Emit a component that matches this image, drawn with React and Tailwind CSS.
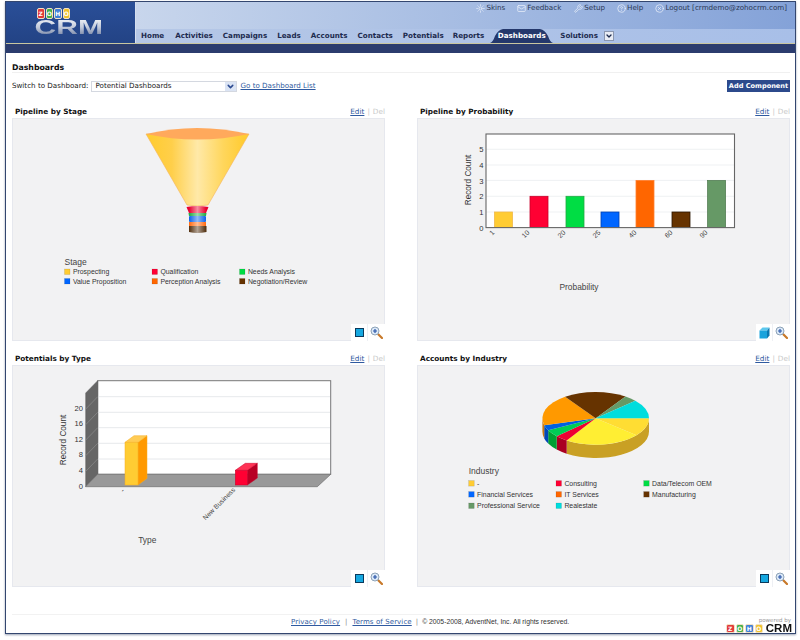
import { Sun, Mail, Wrench, HelpCircle, XCircle, ChevronDown } from "lucide-react";

const navItems = [
  { label: "Home", cls: "mr-[11px]" },
  { label: "Activities", cls: "mr-[10px]" },
  { label: "Campaigns", cls: "mr-[10px]" },
  { label: "Leads", cls: "mr-[10px]" },
  { label: "Accounts", cls: "mr-[10px]" },
  { label: "Contacts", cls: "mr-[10px]" },
  { label: "Potentials", cls: "mr-[9px]" },
  { label: "Reports", cls: "mr-[10px]" },
];
const topLinks = [
  { label: "Skins", icon: Sun, cls: "ml-0" },
  { label: "Feedback", icon: Mail, cls: "ml-[12px]" },
  { label: "Setup", icon: Wrench, cls: "ml-[13px]" },
  { label: "Help", icon: HelpCircle, cls: "ml-[12px]" },
  { label: "Logout [crmdemo@zohocrm.com]", icon: XCircle, cls: "ml-[12px]" },
];

const C = { yellow: "#ffcc33", red: "#ff0033", green: "#00dd44", blue: "#0066ff", orange: "#ff6600", brown: "#663300", sage: "#669966", cyan: "#00dddd" };
const legendFont = "'Liberation Sans', Arial, sans-serif";

function Legend({ title, titleX, titleY, items }) {
  return (
    <g fontFamily={legendFont} fontSize="6.9" fill="#333">
      <text x={titleX} y={titleY} fontSize="8.5" fill="#444">{title}</text>
      {items.map(it => (
        <g key={it.label}>
          <rect x={it.x} y={it.y - 5} width="5.5" height="5.5" fill={it.color} stroke="#0003" strokeWidth="0.5" />
          <text x={it.x + 8.4} y={it.y + 0.4}>{it.label}</text>
        </g>
      ))}
    </g>
  );
}

function FunnelChart() {
  return (
    <svg viewBox="12 118 373 223" className="w-full h-full block">
      <defs>
        <linearGradient id="fy" x1="0" x2="1" y1="0" y2="0">
          <stop offset="0.05" stopColor="#ffcc33" />
          <stop offset="0.25" stopColor="#ffcf4a" />
          <stop offset="0.5" stopColor="#ffe9a8" />
          <stop offset="0.75" stopColor="#ffd65c" />
          <stop offset="0.95" stopColor="#ffcc33" />
        </linearGradient>
        <linearGradient id="fshine" x1="0" x2="1" y1="0" y2="0">
          <stop offset="0" stopColor="#fff" stopOpacity="0" />
          <stop offset="0.5" stopColor="#fff" stopOpacity="0.55" />
          <stop offset="1" stopColor="#fff" stopOpacity="0" />
        </linearGradient>
      </defs>
      <path d="M146 134 L187 205 Q197 207 208 205 L249 134 Z" fill="url(#fy)" stroke="#f5b45a" strokeWidth="0.6" />
      <path d="M146 134 Q197 122 249 134 Q197 145 146 134 Z" fill="#ffa95c" />
      <path d="M186.5 207 Q197 205 208.5 207 L206 213 L189 213 Z" fill="#e8002e" />
      <path d="M188.5 213 H206.5 L206 216 H189 Z" fill="#22aa44" />
      <rect x="189" y="216" width="17" height="6" rx="1" fill="#0a62e8" />
      <rect x="189" y="222" width="17" height="4" fill="#ff6a10" />
      <path d="M189 226 H206.5 V232 Q197 234 189 232 Z" fill="#52300f" />
      <rect x="189" y="206" width="17" height="27" fill="url(#fshine)" />
      <Legend title="Stage" titleX={64.5} titleY={265} items={[
        { label: "Prospecting", x: 64.5, y: 274, color: C.yellow },
        { label: "Qualification", x: 152, y: 274, color: C.red },
        { label: "Needs Analysis", x: 239.5, y: 274, color: C.green },
        { label: "Value Proposition", x: 64.5, y: 283.5, color: C.blue },
        { label: "Perception Analysis", x: 152, y: 283.5, color: C.orange },
        { label: "Negotiation/Review", x: 239.5, y: 283.5, color: C.brown },
      ]} />
    </svg>
  );
}

const probBars = [
  { label: "1", x: 494.5, top: 212, color: C.yellow, edge: "#f0b84a", lx: 495 },
  { label: "10", x: 530, top: 196.3, color: C.red, edge: "#c8002a", lx: 530 },
  { label: "20", x: 566, top: 196.3, color: C.green, edge: "#22aa44", lx: 566 },
  { label: "25", x: 601, top: 212, color: C.blue, edge: "#0040b0", lx: 601 },
  { label: "40", x: 636, top: 180.4, color: C.orange, edge: "#ff8030", lx: 637 },
  { label: "60", x: 672, top: 212, color: C.brown, edge: "#2a1500", lx: 673 },
  { label: "90", x: 707.6, top: 180.4, color: C.sage, edge: "#557f55", lx: 708 },
];

function ProbabilityChart() {
  return (
    <svg viewBox="417 118 373 223" className="w-full h-full block" fontFamily={legendFont}>
      <rect x="486" y="134" width="248.5" height="93.6" fill="#fff" />
      {[149.3, 165, 180.4, 196.3, 212].map(y => <line key={y} x1="486" x2="734" y1={y} y2={y} stroke="#e8ebee" strokeWidth="0.7" />)}
      {probBars.map(b => (
        <rect key={b.label} x={b.x} y={b.top} width="18" height={227.4 - b.top} fill={b.color} stroke={b.edge} strokeWidth="0.8" />
      ))}
      <rect x="486" y="134" width="248.5" height="93.6" fill="none" stroke="#666" strokeWidth="1.1" />
      {[5, 4, 3, 2, 1, 0].map((n, i) => <text key={n} x="483.5" y={152.2 + i * 15.7} fontSize="7.6" textAnchor="end" fill="#333">{n}</text>)}
      {probBars.map(b => (
        <text key={b.label} transform={`translate(${b.lx} 233) rotate(-45)`} fontSize="7" textAnchor="end" fill="#444">{b.label}</text>
      ))}
      <text transform="translate(471 180) rotate(-90)" fontSize="8.2" textAnchor="middle" fill="#333">Record Count</text>
      <text x="579" y="289.5" fontSize="8.4" textAnchor="middle" fill="#444">Probability</text>
    </svg>
  );
}

function Bar3d({ x, w, top, bottom, dx, dy, front, side, cap, edge }) {
  return (
    <g stroke={edge} strokeWidth="0.5">
      <path d={`M${x + w} ${top} l${dx} ${-dy} V${bottom - dy} L${x + w} ${bottom} Z`} fill={side} />
      <path d={`M${x} ${top} l${dx} ${-dy} h${w} l${-dx} ${dy} Z`} fill={cap} />
      <rect x={x} y={top} width={w} height={bottom - top} fill={front} />
    </g>
  );
}

function TypeChart() {
  const rows = [396.7, 412.3, 427.7, 443.3, 459];
  return (
    <svg viewBox="12 365 373 222" className="w-full h-full block" fontFamily={legendFont}>
      <rect x="97.7" y="380.7" width="233" height="93.6" fill="#fff" stroke="#777" strokeWidth="1" />
      <path d="M97.7 380.7 L85.7 393 V486.7 L97.7 474.3 Z" fill="#666" stroke="#555" strokeWidth="0.5" />
      {rows.map(y => (
        <g key={y} stroke="#dfe2e6" strokeWidth="0.8">
          <line x1="98" x2="330" y1={y} y2={y} />
          <line x1="85.7" x2="97.7" y1={y + 12.4} y2={y} stroke="#888" />
        </g>
      ))}
      <path d="M97.7 474.3 H330.7 L317.3 486.7 H85.7 Z" fill="#999" stroke="#777" strokeWidth="0.8" />
      <Bar3d x={125} w={13} top={442.3} bottom={485} dx={9} dy={6.6} front="#ffcc33" side="#ff9900" cap="#ffcc55" edge="#f5ad20" />
      <Bar3d x={235.3} w={12} top={470.3} bottom={485} dx={10} dy={7} front="#ff0033" side="#b80025" cap="#ff3355" edge="#c8002a" />
      {[20, 16, 12, 8, 4, 0].map((n, i) => <text key={n} x="83" y={410.6 + i * 15.6} fontSize="7.6" textAnchor="end" fill="#333">{n}</text>)}
      <text transform="translate(66 440) rotate(-90)" fontSize="8.2" textAnchor="middle" fill="#333">Record Count</text>
      <text transform="translate(125 491) rotate(-45)" fontSize="7" textAnchor="end" fill="#444">-</text>
      <text transform="translate(235.5 490.5) rotate(-45)" fontSize="6.7" textAnchor="end" fill="#444">New Business</text>
      <text x="147.3" y="542.7" fontSize="8.4" textAnchor="middle" fill="#444">Type</text>
    </svg>
  );
}

// parametric ellipse helpers for the pie, angles in degrees clockwise from 3 o'clock
const pie = { cx: 595.7, cy: 418.3, rx: 53.3, ry: 26.4, d: 13.3 };
const pt = (t) => [pie.cx + pie.rx * Math.cos((t * Math.PI) / 180), pie.cy + pie.ry * Math.sin((t * Math.PI) / 180)];
const wedge = (a, b) => {
  const [x1, y1] = pt(a);
  const [x2, y2] = pt(b);
  return `M${pie.cx} ${pie.cy} L${x1} ${y1} A${pie.rx} ${pie.ry} 0 ${b - a > 180 ? 1 : 0} 1 ${x2} ${y2} Z`;
};
const band = (a, b) => {
  const [x1, y1] = pt(a);
  const [x2, y2] = pt(b);
  return `M${x1} ${y1} A${pie.rx} ${pie.ry} 0 0 1 ${x2} ${y2} v${pie.d} A${pie.rx} ${pie.ry} 0 0 0 ${x1} ${y1 + pie.d} Z`;
};
const slices = [
  [0, 40, "#ffdd33"], [40, 123, "#ffee33"], [123, 137, "#ee0033"], [137, 153, "#00cc55"],
  [153, 165, "#0060e0"], [165, 235, "#ff9900"], [235, 304, "#663300"], [304, 318, "#669966"], [318, 360, "#00dddd"],
];
const sides = [[0, 123, "#c9a024"], [123, 137, "#aa0022"], [137, 153, "#00a033"], [153, 165, "#0048b8"], [165, 180, "#cc7a10"]];

function IndustryChart() {
  return (
    <svg viewBox="417 365 373 222" className="w-full h-full block">
      {sides.map(([a, b, c]) => <path key={a} d={band(a, b)} fill={c} />)}
      {slices.map(([a, b, c]) => <path key={a} d={wedge(a, b)} fill={c} />)}
      <Legend title="Industry" titleX={468.7} titleY={474.3} items={[
        { label: "-", x: 468.7, y: 485.6, color: C.yellow },
        { label: "Consulting", x: 556, y: 485.6, color: C.red },
        { label: "Data/Telecom OEM", x: 643.7, y: 485.6, color: C.green },
        { label: "Financial Services", x: 468.7, y: 496.6, color: C.blue },
        { label: "IT Services", x: 556, y: 496.6, color: C.orange },
        { label: "Manufacturing", x: 643.7, y: 496.6, color: C.brown },
        { label: "Professional Service", x: 468.7, y: 508, color: C.sage },
        { label: "Realestate", x: 556, y: 508, color: C.cyan },
      ]} />
    </svg>
  );
}

function ChartTypeIcon({ cube }) {
  if (cube) {
    return (
      <svg width="11" height="12" viewBox="0 0 11 12">
        <path d="M0.5 3.5 L3.5 0.5 H10.5 L8 3.5 Z" fill="#5cc8ee" />
        <path d="M8 3.5 L10.5 0.5 V8.5 L8 11.5 Z" fill="#0b78b0" />
        <rect x="0.5" y="3.5" width="7.5" height="8" fill="#1aa3dc" />
      </svg>
    );
  }
  return <span className="block w-[9px] h-[9px] bg-[#16a8e0] border border-[#0b3a5c]" />;
}

function ZoomIcon() {
  return (
    <svg width="13" height="13" viewBox="0 0 13 13">
      <path d="M7.5 7.5 L12 12" stroke="#c8792a" strokeWidth="2.2" strokeLinecap="round" />
      <circle cx="5" cy="5" r="4" fill="#dbe9f8" stroke="#8ea3b8" strokeWidth="1" />
      <path d="M3 5 H7 M5 3 V7" stroke="#2a55a8" strokeWidth="1.2" />
    </svg>
  );
}

function Panel({ title, height, cube, children }) {
  return (
    <div>
      <div className="flex items-center justify-between h-[13px] pt-[1px] text-[7.3px] pl-[3px]">
        <span className="font-bold text-[#111]">{title}</span>
        <span className="text-[#c8c8c8]">
          <a className="text-[#2f5aa0] underline">Edit</a>
          <span className="mx-[3px]">|</span>
          Del
        </span>
      </div>
      <div className={`relative bg-[#f2f2f3] shadow-[inset_0_0_0_1px_#e6e8ee] ${height}`}>
        {children}
        <div className="absolute right-0 bottom-0 flex bg-white h-[17px]">
          <span className="w-[17px] flex items-center justify-center border-r border-[#eef0f4]"><ChartTypeIcon cube={cube} /></span>
          <span className="w-[17px] flex items-center justify-center"><ZoomIcon /></span>
        </div>
      </div>
    </div>
  );
}

function ZohoBlocks({ size }) {
  const letters = [["Z", "bg-[#e23a3a]"], ["O", "bg-[#45b04a]"], ["H", "bg-[#3f7fd8]"], ["O", "bg-[#f0c22e]"]];
  return (
    <span className="flex gap-[1px]">
      {letters.map(([l, c], i) => (
        <span key={i} className={`${size} ${c} rounded-[2px] border border-[#f3e2c4] flex items-center justify-center text-white font-bold leading-none`}>{l}</span>
      ))}
    </span>
  );
}

export default function App() {
  return (
    <div className="w-[800px] h-[640px] bg-white pt-[1px] pl-[5px] font-['DejaVu_Sans',Verdana,sans-serif] overflow-hidden">
      <div className="w-[791px] h-[633px] border border-[#33466f] shadow-[0_1px_2px_#9aa3b5] flex flex-col">
        <div className="flex h-[41px] shrink-0">
          <div className="w-[129px] bg-gradient-to-b from-[#2a4f98] to-[#234385] pt-[6px] pl-[29px]">
            <div className="w-[67px] flex flex-col">
              <span className="ml-[2px]"><ZohoBlocks size="w-[7.5px] h-[11px] text-[6px]" /></span>
              <span className="self-center font-['Liberation_Sans',Arial,sans-serif] font-black text-[20px] leading-[16px] scale-x-[1.5] bg-gradient-to-b from-[#eef1f6] via-[#c4ccdc] to-[#7f8caa] bg-clip-text text-transparent">CRM</span>
            </div>
          </div>
          <div className="flex-1 flex flex-col border-l border-[#d5deef]">
            <div className="h-[27px] bg-gradient-to-r from-[#c8d6ec] to-[#84a2d8] flex justify-end pt-[1px] pr-[8px] text-[7.15px] text-[#2b3856]">
              {topLinks.map(t => (
                <span key={t.label} className={`flex items-center h-[11px] gap-[1px] ${t.cls}`}>
                  <t.icon size={9} className="text-[#e8eef8]" strokeWidth={2} />
                  {t.label}
                </span>
              ))}
            </div>
            <div className="h-[14px] bg-gradient-to-r from-[#b5c7e6] to-[#a8bfe8] flex items-center pl-[5px] text-[7.15px] font-bold text-[#1d2b4f] relative">
              {navItems.map(n => <span key={n.label} className={n.cls}>{n.label}</span>)}
              <span className="relative ml-[-4px] mr-[7px] w-[63px] h-[14px] flex items-center justify-center text-white">
                <svg className="absolute inset-0" width="63" height="14" viewBox="0 0 63 14">
                  <path d="M0 14 Q3 13 5 7 Q8 1 13 0 H50 Q55 1 58 7 Q60 13 63 14 Z" fill="#24386c" />
                </svg>
                <span className="relative">Dashboards</span>
              </span>
              <span>Solutions</span>
              <span className="ml-[6px] w-[10px] h-[10px] bg-[#e8ecf4] border border-[#8a97b0] flex items-center justify-center">
                <ChevronDown size={8} strokeWidth={4} className="text-[#1d2b4f]" />
              </span>
            </div>
          </div>
        </div>
        <div className="h-[10px] shrink-0 bg-[#2b3c6e] border-t border-[#c9c6a0]" />

        <div className="flex-1 flex flex-col pl-[6px] pr-[5px]">
          <h1 className="mt-[10px] h-[9px] leading-[9px] text-[7.8px] font-bold text-[#111]">Dashboards</h1>
          <div className="border-b border-[#f0f0f0]" />
          <div className="flex items-center mt-[7px] h-[12px] text-[7.15px] text-[#222]">
            <span>Switch to Dashboard:</span>
            <span className="ml-[3px] w-[146px] h-[11px] border border-[#d4d8e0] flex items-center justify-between pl-[3px]">
              Potential Dashboards
              <span className="w-[11px] h-[9px] bg-[#dbe4f4] flex items-center justify-center">
                <ChevronDown size={9} strokeWidth={4} className="text-[#2b4a90]" />
              </span>
            </span>
            <a className="ml-[3px] text-[#2f5aa0] underline">Go to Dashboard List</a>
            <button className="ml-auto w-[63px] h-[12px] bg-[#2c4a8c] text-white font-bold text-[6.6px] leading-none whitespace-nowrap">Add Component</button>
          </div>
          <div className="grid grid-cols-[373px_373px] gap-x-[32px] gap-y-[11px] mt-[13px]">
            <Panel title="Pipeline by Stage" height="h-[223px]"><FunnelChart /></Panel>
            <Panel title="Pipeline by Probability" cube height="h-[223px]"><ProbabilityChart /></Panel>
            <Panel title="Potentials by Type" height="h-[222px]"><TypeChart /></Panel>
            <Panel title="Accounts by Industry" height="h-[222px]"><IndustryChart /></Panel>
          </div>
          <div className="mt-auto border-t border-[#f2f2f2] h-[19px] flex items-start pt-[2px] pl-[279px] relative text-[7px]">
            <a className="text-[#2f5aa0] underline tracking-[0.1px]">Privacy Policy</a>
            <span className="mx-[5px] text-[#888]">|</span>
            <a className="text-[#2f5aa0] underline tracking-[0.1px]">Terms of Service</a>
            <span className="mx-[4px] text-[#888]">|</span>
            <span className="font-['Liberation_Sans',Arial,sans-serif] text-[6.8px] leading-[10px] text-[#333]">© 2005-2008, AdventNet, Inc. All rights reserved.</span>
            <div className="absolute right-[-2px] top-[2px] flex flex-col items-end">
              <span className="text-[5.5px] leading-[7px] text-[#999] pr-[1px]">powered by</span>
              <span className="flex items-center gap-[2px]">
                <ZohoBlocks size="w-[8.5px] h-[9px] text-[6px]" />
                <span className="font-['Liberation_Sans',Arial,sans-serif] font-bold text-[10px] leading-[9px] text-[#111] w-[27px] text-right scale-x-[1.15] origin-right">CRM</span>
              </span>
            </div>
          </div>
        </div>
      </div>
    </div>
  );
}
